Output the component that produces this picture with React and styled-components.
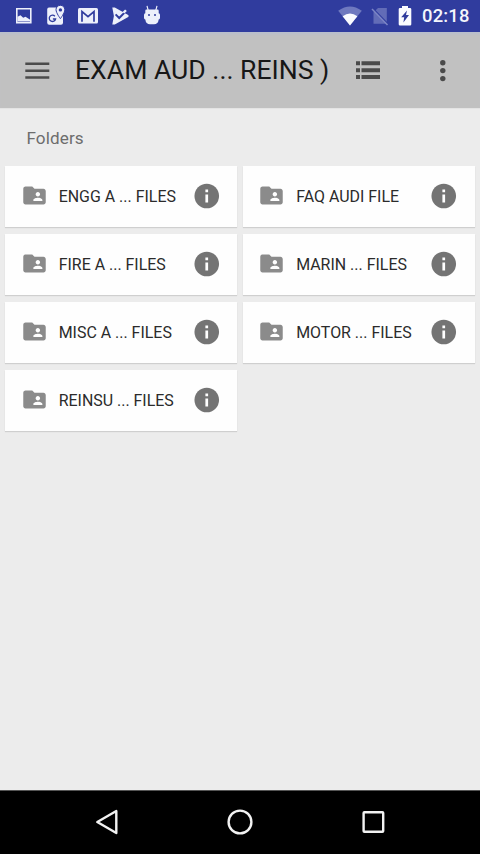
import React from 'react';
import styled, { createGlobalStyle } from 'styled-components';

const GlobalStyle = createGlobalStyle`
  * {
    box-sizing: border-box;
  }

  body {
    margin: 0;
    background-color: #ececec;
    font-family: Roboto, "Liberation Sans", sans-serif;
  }

  svg {
    display: block;
    flex-shrink: 0;
  }
`;

const Screen = styled.div`
  display: flex;
  flex-direction: column;
  width: 480px;
  height: 854px;
  overflow: hidden;
  background-color: #ececec;
`;

const StatusBar = styled.header`
  display: flex;
  align-items: center;
  justify-content: space-between;
  height: 32px;
  padding: 0 10px 0 14px;
  background-color: #303c9e;
`;

const StatusGroup = styled.div`
  display: flex;
  align-items: center;
  gap: ${(props) => props.$gap}px;
`;

const Clock = styled.span`
  width: 48px;
  margin-left: 1px;
  color: #f4f5fc;
  font-size: 18.4px;
  font-weight: 500;
  line-height: 34px;
  letter-spacing: 0.2px;
  white-space: nowrap;
`;

const Toolbar = styled.div`
  display: flex;
  align-items: center;
  height: 76px;
  padding: 0 25px 0 24px;
  background-color: #c1c1c1;
  box-shadow: inset 0 4px 3px -2px #b9bfce;
`;

const Title = styled.h1`
  width: 281px;
  margin: 0;
  padding-left: 25px;
  color: #171717;
  font-size: 26.6px;
  font-weight: 400;
  line-height: 76px;
  white-space: nowrap;
`;

const ToolbarButton = styled.button`
  display: flex;
  padding: 0;
  border: 0;
  background: none;
  color: #4b4b4b;
  margin-left: ${(props) => props.$left || 0}px;
`;

const Content = styled.main`
  flex: 1;
  border-top: 1px solid #e4e4e4;
`;

const SectionTitle = styled.h2`
  margin: 0;
  padding-left: 26.5px;
  color: #6d6d6d;
  font-size: 17.1px;
  font-weight: 400;
  line-height: 59px;
  height: 56.5px;
  letter-spacing: 0.1px;
`;

const FolderGrid = styled.div`
  display: grid;
  grid-template-columns: 232px 232px;
  grid-auto-rows: 61px;
  gap: 7px 5.5px;
  padding-left: 5.2px;
`;

const FolderCard = styled.div`
  display: flex;
  align-items: center;
  padding: 0 16px 0 15.8px;
  background-color: #fefefe;
  box-shadow: 0 1px 1px rgba(0, 0, 0, 0.12);
`;

const FolderName = styled.span`
  flex: 1;
  padding: 1px 0 0 10.7px;
  color: #2b2b2b;
  font-size: 15.95px;
  line-height: 24px;
  white-space: nowrap;
`;

const NavBar = styled.nav`
  display: flex;
  align-items: center;
  justify-content: space-between;
  height: 64px;
  padding: 0 93px 2px;
  border-top: 1px solid #555;
  background-color: #000;
`;

const folders = [
  'ENGG A ... FILES',
  'FAQ AUDI FILE',
  'FIRE A ... FILES',
  'MARIN ... FILES',
  'MISC A ... FILES',
  'MOTOR ... FILES',
  'REINSU ... FILES',
];

const PictureIcon = () => (
  <svg width="20" height="22" viewBox="0 0 20 22">
    <path d="M2.8 3.8h14v14h-14z" fill="none" stroke="#edf0fb" strokeWidth="1.6" />
    <path d="M3.5 16.5v-4.7l3-1.6 2.7 2.6 2.3-1 4.7 3v1.7z" fill="#edf0fb" />
  </svg>
);

// The pin is outlined in the bar colour so it separates from the sheet.
const MapsIcon = () => (
  <svg width="20" height="22" viewBox="0 0 20 22">
    <path d="M3 2.5h12q2 0 2 2v13.2q0 2-2 2H3.2q-2 0-2-2V4.5q0-2 1.8-2z" fill="#edf0fb" />
    <path
      d="M8.9 11.2a3.2 3.2 0 1 0 .7 2.8H6.9"
      fill="none"
      stroke="#303c9e"
      strokeWidth="1.3"
    />
    <path
      d="M14.4.3a4.4 4.4 0 0 0-4.4 4.4c0 3.1 4.4 9 4.4 9s4.4-5.9 4.4-9A4.4 4.4 0 0 0 14.4.3z"
      fill="#edf0fb"
      stroke="#303c9e"
      strokeWidth="1"
    />
    <circle cx="14.4" cy="4.9" r="1.7" fill="#303c9e" />
  </svg>
);

const MailIcon = () => (
  <svg width="20" height="22" viewBox="0 0 20 22">
    <rect x="0" y="3" width="20" height="15.5" rx="1.5" fill="#edf0fb" />
    <path d="M4 16.8V6.5l6 5.2 6-5.2v10.3" fill="none" stroke="#303c9e" strokeWidth="1.7" />
  </svg>
);

const PlayCheckIcon = () => (
  <svg width="20" height="22" viewBox="0 0 20 22">
    <path d="M2.3 2.6h2.5L18.2 10q1 1 0 2L4.8 19.4H2.3l1.6-8.4z" fill="#edf0fb" />
    <path d="m5.6 9.4 3.6 3.6 7.6-7.6" fill="none" stroke="#303c9e" strokeWidth="2" />
    <path d="m12.5 7.1 2.6-2.6 1.7 1.6-2.4 2.4z" fill="#edf0fb" />
  </svg>
);

const AndroidIcon = () => (
  <svg width="20" height="22" viewBox="0 0 20 22">
    <path d="m5 .8 1.2 4.5M15 .8l-1.2 4.5" stroke="#edf0fb" strokeWidth="1.2" />
    <path
      d="M4.5 4.5h11q1.2 0 1.2 1.2v2.5q1.3.3 1.3 1.8v2.8q0 1.4-1.3 1.7-.6 4.7-4.7 4.7H8q-4.1 0-4.7-4.7Q2 14.2 2 12.8V10q0-1.5 1.3-1.8V5.7q0-1.2 1.2-1.2z"
      fill="#edf0fb"
    />
    <circle cx="7" cy="10" r="1" fill="#303c9e" />
    <circle cx="13" cy="10" r="1" fill="#303c9e" />
  </svg>
);

const WifiIcon = () => (
  <svg width="24" height="22" viewBox="0 0 24 22">
    <path d="M12 20.5.2 5.8Q12-2.8 23.8 5.8z" fill="#6f79bf" />
    <path d="M12 20.5 4.6 11.3Q12 5.8 19.4 11.3z" fill="#fafbff" />
  </svg>
);

const NoSimIcon = () => (
  <svg width="18" height="22" viewBox="0 0 18 22">
    <path d="M7 3h8.8v15.8H2.5V7.3z" fill="#626cb7" />
    <path d="m2.2 3.7 15 15.5" stroke="#303c9e" strokeWidth="1.6" />
    <path d="m1 4 15.5 16" stroke="#7c85c5" strokeWidth="1.5" />
  </svg>
);

const BatteryIcon = () => (
  <svg width="14" height="22" viewBox="0 0 14 22">
    <path d="M4 1h6v2h2q1.3 0 1.3 1.3v14.9q0 1.3-1.3 1.3H2q-1.3 0-1.3-1.3V4.3Q.7 3 2 3h2z" fill="#fafbff" />
    <path d="M9 5.5 3.2 12.3h3l-.8 5.2L11 10H8z" fill="#303c9e" />
  </svg>
);

const MenuIcon = () => (
  <svg width="26" height="20" viewBox="0 0 26 20" fill="currentColor">
    <path d="M1.3 2.5h24v2.5h-24zM1.3 9.5h24V12h-24zM1.3 16.3h24v2.5h-24z" />
  </svg>
);

const ListIcon = () => (
  <svg width="24" height="20" viewBox="0 0 24 20" fill="currentColor">
    <path d="M0 1.2h4v4H0zM0 8.2h4v4H0zM0 15h4v4H0zM5.5 1.2H24v4H5.5zM5.5 8.2H24v4H5.5zM5.5 15H24v4H5.5z" />
  </svg>
);

const MoreIcon = () => (
  <svg width="6" height="24" viewBox="0 0 6 24" fill="currentColor">
    <circle cx="2.8" cy="4.7" r="2.7" />
    <circle cx="2.8" cy="12.6" r="2.7" />
    <circle cx="2.8" cy="20.6" r="2.7" />
  </svg>
);

const FolderIcon = () => (
  <svg width="27" height="29" viewBox="0 0 24 25.8" fill="#8b8b8b">
    <path d="M20 6h-8l-2-2H4c-1.1 0-1.99.9-1.99 2L2 18c0 1.1.9 2 2 2h16c1.1 0 2-.9 2-2V8c0-1.1-.9-2-2-2zm-5 3c1.1 0 2 .9 2 2s-.9 2-2 2-2-.9-2-2 .9-2 2-2zm4 8h-8v-1c0-1.33 2.67-2 4-2s4 .67 4 2v1z" />
  </svg>
);

const InfoIcon = () => (
  <svg width="29.5" height="29.5" viewBox="0 0 24 24">
    <circle cx="12" cy="12.2" r="10" fill="#747474" />
    <path d="M10.9 7h2.2v2.2h-2.2zM10.9 10.9h2.2v6.5h-2.2z" fill="#fff" />
  </svg>
);

const BackIcon = () => (
  <svg width="28" height="28" viewBox="0 0 28 28" fill="none" stroke="#f2f2f2">
    <path d="M4.3 14 23.3 3v22z" strokeWidth="2.4" strokeLinejoin="round" />
  </svg>
);

const HomeIcon = () => (
  <svg width="28" height="28" viewBox="0 0 28 28" fill="none" stroke="#f2f2f2">
    <circle cx="14" cy="14" r="11.4" strokeWidth="2.4" />
  </svg>
);

const RecentIcon = () => (
  <svg width="28" height="28" viewBox="0 0 28 28" fill="none" stroke="#f2f2f2">
    <rect x="4.6" y="4.2" width="19.6" height="19.6" rx="0.8" strokeWidth="2.4" />
  </svg>
);

const App = () => {
  return (
    <Screen>
      <GlobalStyle />
      <StatusBar>
        <StatusGroup $gap={12}>
          <PictureIcon />
          <MapsIcon />
          <MailIcon />
          <PlayCheckIcon />
          <AndroidIcon />
        </StatusGroup>
        <StatusGroup $gap={9}>
          <WifiIcon />
          <NoSimIcon />
          <BatteryIcon />
          <Clock>02:18</Clock>
        </StatusGroup>
      </StatusBar>
      <Toolbar>
        <ToolbarButton>
          <MenuIcon />
        </ToolbarButton>
        <Title>EXAM AUD ... REINS )</Title>
        <ToolbarButton $left={25}>
          <ListIcon />
        </ToolbarButton>
        <ToolbarButton $left={60}>
          <MoreIcon />
        </ToolbarButton>
      </Toolbar>
      <Content>
        <SectionTitle>Folders</SectionTitle>
        <FolderGrid>
          {folders.map((name) => (
            <FolderCard key={name}>
              <FolderIcon />
              <FolderName>{name}</FolderName>
              <InfoIcon />
            </FolderCard>
          ))}
        </FolderGrid>
      </Content>
      <NavBar>
        <BackIcon />
        <HomeIcon />
        <RecentIcon />
      </NavBar>
    </Screen>
  );
};

export default App;
